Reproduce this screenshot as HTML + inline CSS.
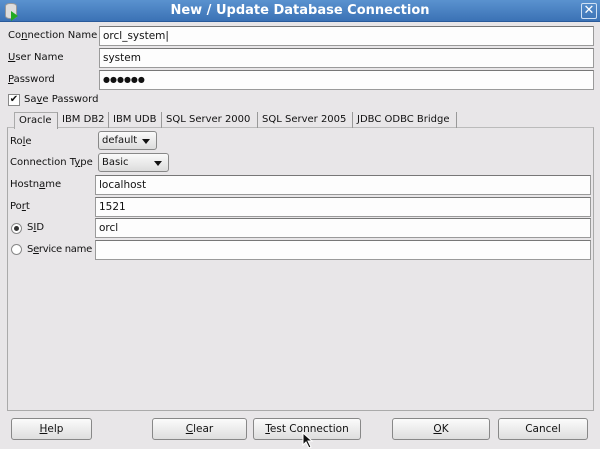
<!DOCTYPE html>
<html><head><style>
*{box-sizing:border-box;margin:0;padding:0}
body{width:600px;height:449px;background:#e8e6e8;font-family:"DejaVu Sans","Liberation Sans",sans-serif;font-size:10px;color:#111;position:relative;overflow:hidden}
.a{position:absolute;white-space:nowrap}
.title{left:0;top:0;width:600px;height:22px;background:linear-gradient(#5a92cf,#3b72b5);color:#fff;font-weight:bold;font-size:13px;text-align:center;line-height:22px;border-bottom:1px solid #2a5a9a}
.inp{background:#fdfdfd;border:1px solid #9a9a9a;border-top-color:#777;padding-left:3px;line-height:18px;font-size:10.5px}
.lbl{line-height:14px}
.dd{background:linear-gradient(#fafafa,#dcdcdc);border:1px solid #888;border-radius:3px;padding-left:3px;line-height:17px}
.dd:after{content:"";position:absolute;right:6px;top:7px;border:4px solid transparent;border-top:5px solid #111}
.btn{background:linear-gradient(#fbfbfb,#dedede);border:1px solid #888;border-radius:3px;text-align:center;line-height:20px;top:418px;height:22px;font-size:10.5px}
u{text-decoration:underline}
.tab{top:112px;height:16px;line-height:15px;padding:0 4px;border-right:1px solid #999;font-size:10px}
.rad{width:11px;height:11px;border:1px solid #888;border-radius:50%;background:#fff}
</style></head><body>
<div class="a title">New / Update Database Connection</div>
<div class="a" style="left:5px;top:3px;width:12px;height:16px;background:#ddd;border-radius:5px/3px;border:1px solid #999"></div>
<div class="a" style="left:11px;top:11px;width:0;height:0;border:5px solid transparent;border-left:7px solid #2a2"></div>
<div class="a" style="left:581px;top:3px;width:16px;height:16px;border:1px solid #cfe0f4;border-radius:2px;color:#fff;font-weight:bold;text-align:center;line-height:14px;font-size:13px">✕</div>

<div class="a lbl" style="left:8px;top:29px">Co<u>n</u>nection Name</div>
<div class="a inp" style="left:99px;top:26px;width:495px;height:20px">orcl_system|</div>
<div class="a lbl" style="left:8px;top:51px"><u>U</u>ser Name</div>
<div class="a inp" style="left:99px;top:48px;width:495px;height:20px">system</div>
<div class="a lbl" style="left:8px;top:73px"><u>P</u>assword</div>
<div class="a inp" style="left:99px;top:70px;width:495px;height:20px;font-size:8px;letter-spacing:0px">●●●●●●</div>
<div class="a" style="left:8px;top:94px;width:12px;height:12px;border:1px solid #888;background:#fff;font-size:10px;line-height:10px;text-align:center">✔</div>
<div class="a lbl" style="left:24px;top:93px">Sa<u>v</u>e Password</div>

<div class="a" style="left:7px;top:127px;width:587px;height:284px;border:1px solid #aaa;border-top-color:#bbb"></div>
<div class="a tab" style="left:14px;background:#e8e6e8;height:17px;border-left:1px solid #aaa;border-top:1px solid #aaa;width:44px">Oracle</div>
<div class="a tab" style="left:58px;width:51px">IBM DB2</div>
<div class="a tab" style="left:109px;width:53px">IBM UDB</div>
<div class="a tab" style="left:162px;width:96px">SQL Server 2000</div>
<div class="a tab" style="left:258px;width:95px">SQL Server 2005</div>
<div class="a tab" style="left:353px;width:104px">JDBC ODBC Bridge</div>

<div class="a lbl" style="left:10px;top:135px">Ro<u>l</u>e</div>
<div class="a dd" style="left:98px;top:131px;width:59px;height:19px">default</div>
<div class="a lbl" style="left:10px;top:156px">Connection T<u>y</u>pe</div>
<div class="a dd" style="left:98px;top:153px;width:71px;height:19px">Basic</div>
<div class="a lbl" style="left:10px;top:178px">Hostn<u>a</u>me</div>
<div class="a inp" style="left:95px;top:175px;width:496px;height:20px">localhost</div>
<div class="a lbl" style="left:10px;top:200px">Po<u>r</u>t</div>
<div class="a inp" style="left:95px;top:197px;width:496px;height:20px">1521</div>
<div class="a rad" style="left:11px;top:223px"><div style="width:5px;height:5px;background:#333;border-radius:50%;margin:2px"></div></div>
<div class="a lbl" style="left:27px;top:221px">S<u>I</u>D</div>
<div class="a inp" style="left:95px;top:218px;width:496px;height:20px">orcl</div>
<div class="a rad" style="left:11px;top:244px"></div>
<div class="a lbl" style="left:27px;top:243px;letter-spacing:-0.3px">S<u>e</u>rvice name</div>
<div class="a inp" style="left:95px;top:240px;width:496px;height:20px"></div>

<div class="a btn" style="left:11px;width:81px"><u>H</u>elp</div>
<div class="a btn" style="left:152px;width:95px"><u>C</u>lear</div>
<div class="a btn" style="left:253px;width:108px"><u>T</u>est Connection</div>
<div class="a btn" style="left:392px;width:98px"><u>O</u>K</div>
<div class="a btn" style="left:498px;width:90px">Cancel</div>
<svg class="a" style="left:302px;top:432px" width="12" height="17"><path d="M1 1 L1 13 L4 10 L7 16 L9 15 L6 9 L10 9 Z" fill="#111" stroke="#fff" stroke-width="1"/></svg>
</body></html>
